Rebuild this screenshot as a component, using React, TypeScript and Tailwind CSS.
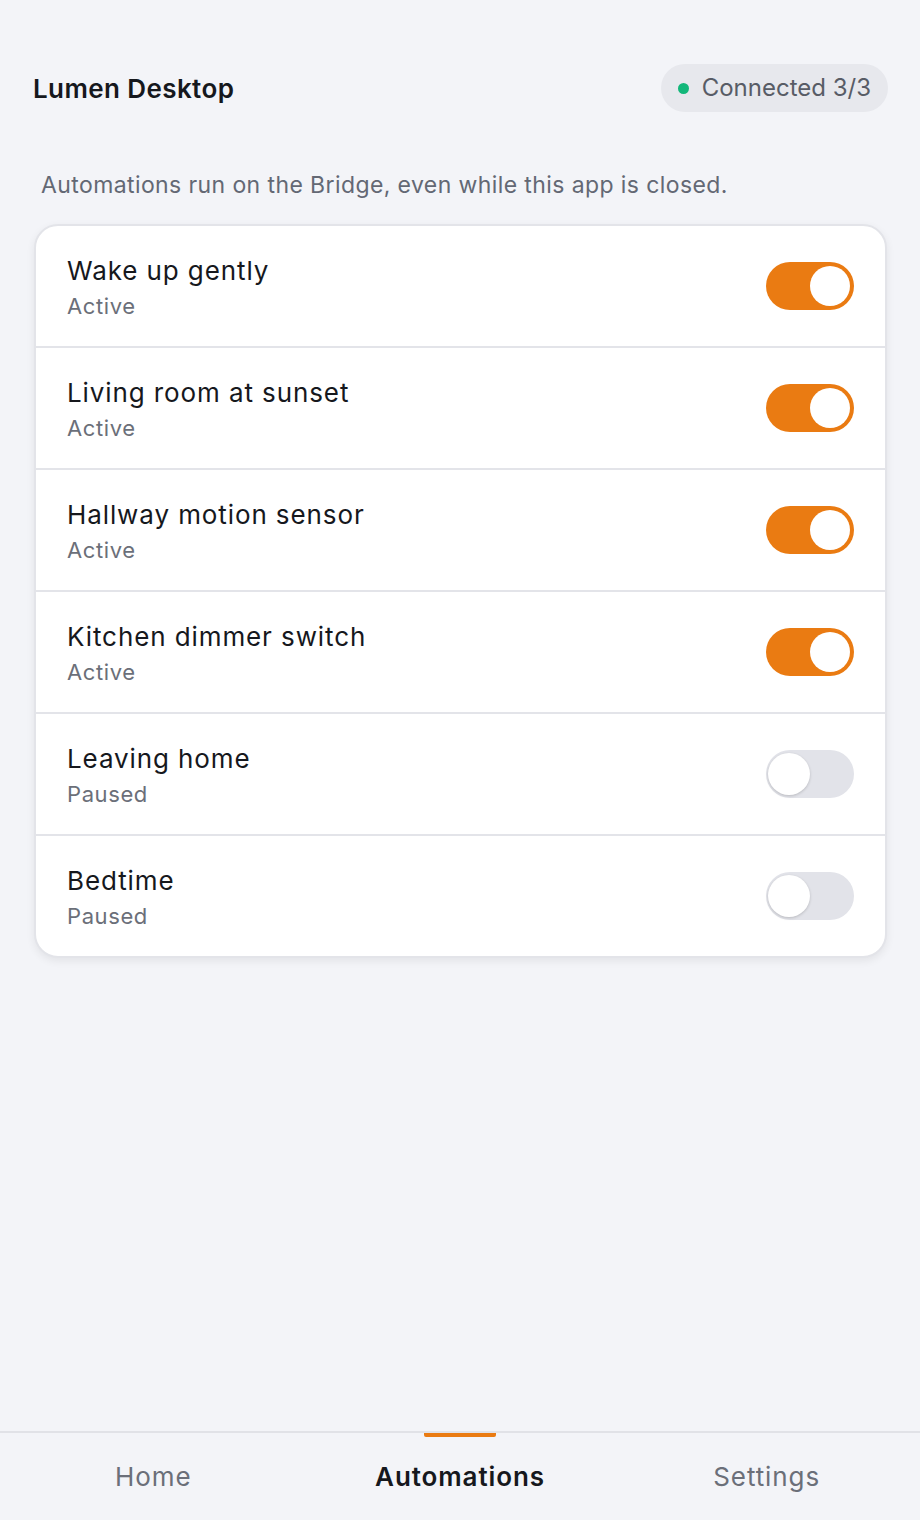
import React from "react";

const items = [
  { name: "Wake up gently", on: true },
  { name: "Living room at sunset", on: true },
  { name: "Hallway motion sensor", on: true },
  { name: "Kitchen dimmer switch", on: true },
  { name: "Leaving home", on: false },
  { name: "Bedtime", on: false },
];

function Toggle({ on }: { on: boolean }) {
  return on ? (
    <div className="w-[88px] h-[48px] rounded-full bg-[#ea7b12] flex items-center justify-end pr-[4px]">
      <div className="w-[40px] h-[40px] rounded-full bg-white" />
    </div>
  ) : (
    <div className="w-[88px] h-[48px] rounded-full bg-[#e2e3e9] flex items-center justify-start pl-[2px]">
      <div className="w-[42px] h-[42px] rounded-full bg-white shadow-[0_1px_3px_rgba(0,0,0,0.18)]" />
    </div>
  );
}

export default function App() {
  return (
    <div
      className="w-[920px] h-[1520px] bg-[#f3f4f8] flex flex-col"
      style={{ fontFamily: "Inter, 'Noto Sans', sans-serif" }}
    >
      <div className="flex-1 flex flex-col px-[33px]">
        <div className="flex items-center justify-between pt-[64px]">
          <div className="text-[26px] font-semibold text-[#16181d] tracking-[0.4px]">Lumen Desktop</div>
          <div className="h-[48px] rounded-full bg-[#e7e8ed] flex items-center pl-[17px] pr-[17px] gap-[13px] -mr-[1px]">
            <div className="w-[11px] h-[11px] rounded-full bg-[#13b77a]" />
            <div className="text-[24px] text-[#585c66]">Connected 3/3</div>
          </div>
        </div>
        <div className="mt-[56px] pl-[8px] text-[23px] tracking-[0.4px] text-[#636874]">
          Automations run on the Bridge, even while this app is closed.
        </div>
        <div className="mt-[21px] ml-[1px] bg-white rounded-[24px] border-2 border-[#e3e4e9] shadow-[0_3px_8px_rgba(0,0,0,0.07)] overflow-hidden">
          {items.map((it, i) => (
            <div
              key={it.name}
              className={`flex items-center justify-between pl-[31px] pr-[31px] ${
                i > 0 ? "h-[122px] border-t-2 border-[#e3e4e9]" : "h-[120px]"
              }`}
            >
              <div className="flex flex-col pt-[2px]">
                <div className="text-[26px] leading-[39px] tracking-[0.9px] text-[#16181d]">{it.name}</div>
                <div className="text-[22px] leading-[33px] text-[#6b6f79] tracking-[0.6px]">
                  {it.on ? "Active" : "Paused"}
                </div>
              </div>
              <Toggle on={it.on} />
            </div>
          ))}
        </div>
      </div>
      <div className="h-[89px] border-t-2 border-[#e1e2e7] grid grid-cols-3 relative">
        {["Home", "Automations", "Settings"].map((t) => (
          <div key={t} className="relative flex items-center justify-center">
            {t === "Automations" && (
              <div className="absolute top-0 left-1/2 -translate-x-1/2 w-[72px] h-[4px] rounded-b-[2px] bg-[#ea7b12]" />
            )}
            <div
              className={`text-[26px] tracking-[0.9px] ${
                t === "Automations" ? "text-[#16181d] font-semibold" : "text-[#6b6f79]"
              }`}
            >
              {t}
            </div>
          </div>
        ))}
      </div>
    </div>
  );
}
